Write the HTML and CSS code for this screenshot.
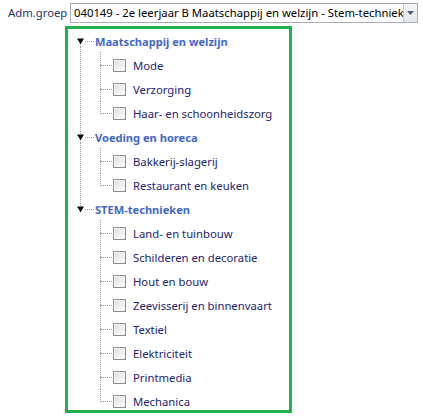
FILE: index.html
```html
<!DOCTYPE html>
<html>
<head>
<meta charset="utf-8">
<link rel="stylesheet" href="styles.css">
</head>
<body>
<div class="toprow">
  <span class="label">Adm.groep</span>
  <div class="select">
    <span class="select-text">040149 - 2e leerjaar B Maatschappij en welzijn - Stem-technieken</span>
    <span class="select-btn"><svg width="7" height="4" viewBox="0 0 7 4"><path d="M0 0H7L3.5 4Z" fill="#4d5f7f"/></svg></span>
  </div>
</div>
<div class="tree">
  <div class="group">
    <div class="head"><svg class="tri" width="7" height="7" viewBox="0 0 7 7"><path d="M0 0.5H7L3.5 6.5Z" fill="#111"/></svg><span class="hline"></span><span class="htext">Maatschappij en welzijn</span></div>
    <div class="kids">
      <div class="kid"><span class="cb"></span><span class="ktext">Mode</span></div>
      <div class="kid"><span class="cb"></span><span class="ktext">Verzorging</span></div>
      <div class="kid"><span class="cb"></span><span class="ktext">Haar- en schoonheidszorg</span></div>
    </div>
  </div>
  <div class="group">
    <div class="head"><svg class="tri" width="7" height="7" viewBox="0 0 7 7"><path d="M0 0.5H7L3.5 6.5Z" fill="#111"/></svg><span class="hline"></span><span class="htext">Voeding en horeca</span></div>
    <div class="kids">
      <div class="kid"><span class="cb"></span><span class="ktext">Bakkerij-slagerij</span></div>
      <div class="kid"><span class="cb"></span><span class="ktext">Restaurant en keuken</span></div>
    </div>
  </div>
  <div class="group last">
    <div class="head"><svg class="tri" width="7" height="7" viewBox="0 0 7 7"><path d="M0 0.5H7L3.5 6.5Z" fill="#111"/></svg><span class="hline"></span><span class="htext">STEM-technieken</span></div>
    <div class="kids">
      <div class="kid"><span class="cb"></span><span class="ktext">Land- en tuinbouw</span></div>
      <div class="kid"><span class="cb"></span><span class="ktext">Schilderen en decoratie</span></div>
      <div class="kid"><span class="cb"></span><span class="ktext">Hout en bouw</span></div>
      <div class="kid"><span class="cb"></span><span class="ktext">Zeevisserij en binnenvaart</span></div>
      <div class="kid"><span class="cb"></span><span class="ktext">Textiel</span></div>
      <div class="kid"><span class="cb"></span><span class="ktext">Elektriciteit</span></div>
      <div class="kid"><span class="cb"></span><span class="ktext">Printmedia</span></div>
      <div class="kid"><span class="cb"></span><span class="ktext">Mechanica</span></div>
    </div>
  </div>
</div>
</body>
</html>
```
FILE: styles.css
```css
html, body {
  margin: 0;
  padding: 0;
  background: #ffffff;
  font-family: "Noto Sans", "Open Sans", sans-serif;
  font-size: 11.3px;
}

.toprow {
  display: flex;
  align-items: center;
  padding: 3px 0 0 8px;
  height: 20px;
}

.label {
  color: #1e3560;
  width: 62px;
  line-height: 20px;
}

.select {
  display: flex;
  width: 346px;
  height: 18px;
  border: 1px solid #abadb3;
  border-top-color: #9da1ab;
  background: #fff;
  overflow: hidden;
}

.select-text {
  flex: 1;
  padding-left: 3px;
  line-height: 18px;
  white-space: nowrap;
  overflow: hidden;
  color: #000;
}

.select-btn {
  width: 13px;
  border-left: 1px solid #c9ccd3;
  background: linear-gradient(#f4f5f7, #e3e6ec);
  display: flex;
  align-items: center;
  justify-content: center;
}

.tree {
  margin: 3px 0 0 65px;
  width: 221px;
  height: 381px;
  border: 3px solid #22b14c;
}

.group {
  position: relative;
}

.group::before {
  content: "";
  position: absolute;
  left: 12px;
  top: 17px;
  bottom: -9px;
  border-left: 1px dotted #9a9a9a;
}

.group.last::before {
  display: none;
}

.head {
  display: flex;
  align-items: center;
  height: 24px;
  padding-left: 9px;
}

.tri {
  display: block;
  flex: none;
}

.hline {
  width: 9px;
  margin: 0 1px 0 1px;
  border-top: 1px dotted #9a9a9a;
}

.htext {
  color: #4467c9;
  font-weight: bold;
  font-size: 11.1px;
}

.kid {
  position: relative;
  display: flex;
  align-items: center;
  height: 24px;
  padding-left: 45px;
}

.kid::before {
  content: "";
  position: absolute;
  left: 32px;
  width: 12px;
  top: 12px;
  border-top: 1px dotted #9a9a9a;
}

.kid::after {
  content: "";
  position: absolute;
  left: 32px;
  top: -1px;
  bottom: 0;
  border-left: 1px dotted #9a9a9a;
}

.kid:last-child::after {
  bottom: 11px;
}

.cb {
  width: 11px;
  height: 11px;
  flex: none;
  border: 1px solid #8f8f8f;
  background: linear-gradient(135deg, #dedede, #fdfdfd);
  box-shadow: inset 0 0 0 1px #f4f4f4;
}

.ktext {
  margin-left: 7px;
  color: #1d2470;
  white-space: nowrap;
}
```
